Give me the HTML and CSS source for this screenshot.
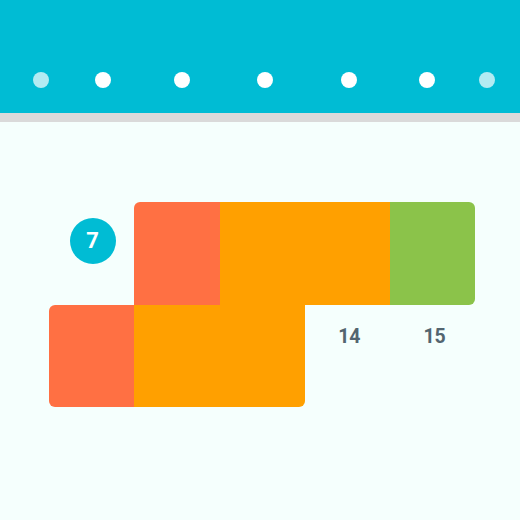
FILE: index.html
```html
<!DOCTYPE html>
<html>
<head>
<meta charset="utf-8">
<link rel="stylesheet" href="styles.css">
</head>
<body>
<header class="top">
  <div class="rings">
    <span class="dot faded"></span>
    <span class="dot"></span>
    <span class="dot"></span>
    <span class="dot"></span>
    <span class="dot"></span>
    <span class="dot"></span>
    <span class="dot faded"></span>
  </div>
</header>
<main class="page">
  <div class="cal">
    <div class="cell day"><span class="badge">7</span></div>
    <div class="cell red r-tl"></div>
    <div class="cell orange span2"></div>
    <div class="cell green r-right"></div>
    <div class="cell red r-left"></div>
    <div class="cell orange span2 r-br"></div>
    <div class="cell day"><span class="num">14</span></div>
    <div class="cell day"><span class="num">15</span></div>
  </div>
</main>
</body>
</html>
```

FILE: styles.css
```css
html, body {
  margin: 0;
  padding: 0;
}
body {
  width: 520px;
  height: 520px;
  background: #F5FFFD;
  font-family: Roboto, "Noto Sans", sans-serif;
  overflow: hidden;
}
.top {
  height: 113px;
  background: #00BCD4;
  border-bottom: 9px solid #DADADA;
  box-sizing: content-box;
}
.rings {
  display: grid;
  grid-template-columns: 62px 62px 96px 70px 98px 58px 62px;
  justify-items: center;
  align-items: center;
  padding-left: 10px;
  padding-top: 72px;
}
.dot {
  width: 16px;
  height: 16px;
  border-radius: 50%;
  background: #FFFFFF;
}
.dot.faded {
  background: rgba(255, 255, 255, 0.7);
}
.page {
  padding: 80px 0 0 49px;
}
.cal {
  display: grid;
  grid-template-columns: repeat(5, 85.25px);
  grid-template-rows: 103px 102px;
}
.span2 {
  grid-column: span 2;
}
.red { background: #FF7043; }
.orange { background: #FFA000; }
.green { background: #8BC34A; }
.r-tl { border-top-left-radius: 6px; }
.r-right { border-top-right-radius: 6px; border-bottom-right-radius: 6px; }
.r-left { border-top-left-radius: 6px; border-bottom-left-radius: 6px; }
.r-br { border-bottom-right-radius: 6px; }
.day {
  display: flex;
  justify-content: center;
  align-items: flex-start;
}
.badge {
  margin-top: 16px;
  margin-left: 2px;
  width: 46px;
  height: 46px;
  border-radius: 50%;
  background: #00BCD4;
  color: #FFFFFF;
  font-weight: 700;
  font-size: 22px;
  line-height: 46px;
  text-align: center;
}
.num {
  margin-top: 20px;
  margin-left: 4px;
  font-size: 19.5px;
  line-height: 24px;
  font-weight: 700;
  color: #536570;
}
```
